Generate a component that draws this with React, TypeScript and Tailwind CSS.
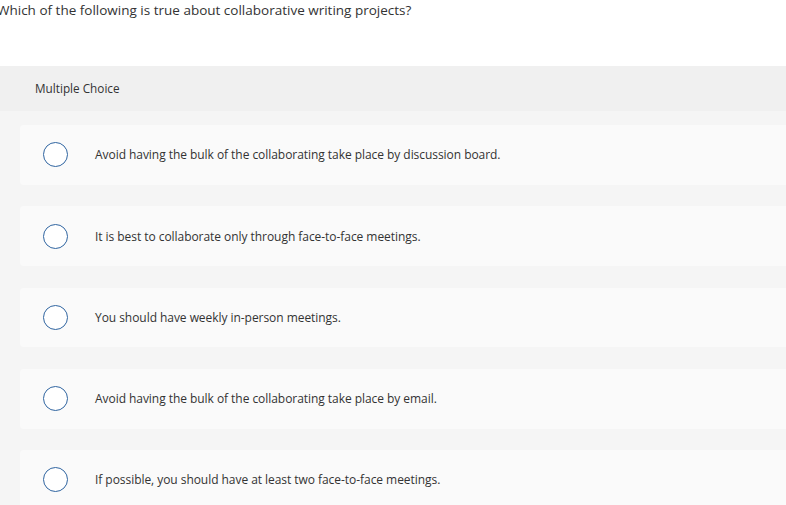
const options = [
  "Avoid having the bulk of the collaborating take place by discussion board.",
  "It is best to collaborate only through face-to-face meetings.",
  "You should have weekly in-person meetings.",
  "Avoid having the bulk of the collaborating take place by email.",
  "If possible, you should have at least two face-to-face meetings.",
];

export default function App() {
  return (
    <div className="w-[786px] h-[505px] overflow-hidden bg-white text-[#333] font-['Open_Sans',sans-serif]">
      <div className="h-[66px] pt-[1px] -ml-[3px] text-[13.5px] leading-[18px] text-[#333] whitespace-nowrap">
        Which of the following is true about collaborative writing projects?
      </div>
      <div className="h-[45px] bg-[#f0f0f0] pl-[35px] flex items-center text-[11.75px] text-[#333]">
        Multiple Choice
      </div>
      <div className="bg-[#f5f5f5] pt-[14px] pl-[20px] flex flex-col gap-[21.5px]">
        {options.map((o) => (
          <div key={o} className="h-[59.75px] bg-[#fafafa] rounded-l-[4px] flex items-center">
            <span className="ml-[23px] w-[25px] h-[25px] rounded-full border-[1.5px] border-[#2f64a0] bg-white shrink-0" />
            <span className="ml-[27px] pt-[1px] text-[12px] tracking-[-0.05px] text-[#333]">{o}</span>
          </div>
        ))}
      </div>
    </div>
  );
}
